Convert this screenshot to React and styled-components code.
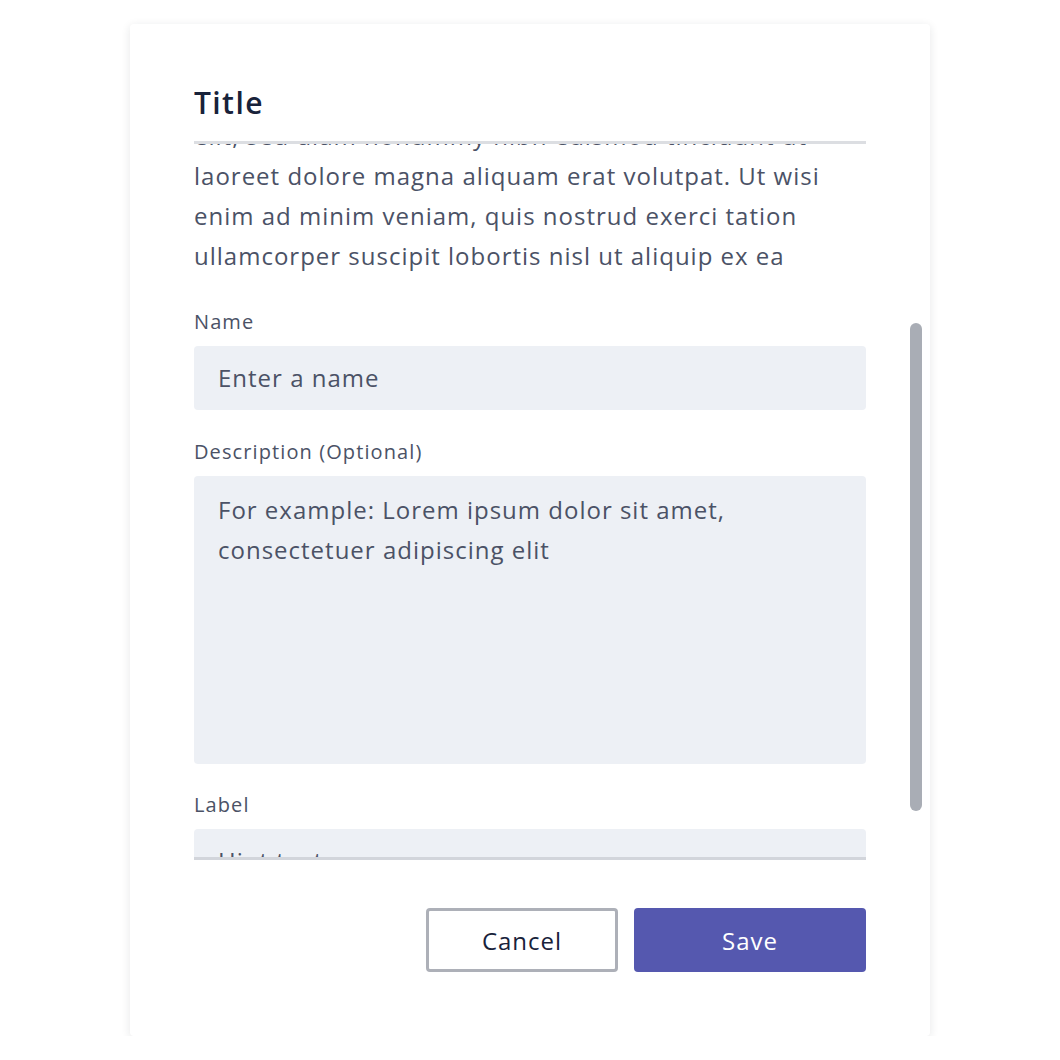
import React, { useLayoutEffect, useRef } from 'react';
import styled, { createGlobalStyle } from 'styled-components';

const GlobalStyle = createGlobalStyle`
  html, body {
    margin: 0;
    padding: 0;
    background: #ffffff;
  }
  body {
    font-family: "Open Sans", "Noto Sans", sans-serif;
  }
  * {
    box-sizing: border-box;
  }
`;

const Page = styled.div`
  display: flex;
  justify-content: center;
  padding-top: 24px;
`;

const Dialog = styled.div`
  position: relative;
  width: 800px;
  height: 1012px;
  background: #ffffff;
  border-radius: 4px;
  box-shadow: 0 2px 10px rgba(30, 35, 50, 0.11);
  padding: 59px 64px 64px;
  display: flex;
  flex-direction: column;
`;

const Title = styled.h1`
  margin: 0 0 18px;
  font-size: 30px;
  line-height: 40px;
  font-weight: 600;
  letter-spacing: 1.4px;
  color: #18223a;
`;

const ScrollFrame = styled.div`
  height: 719px;
  border-top: 3px solid #dcdee2;
  border-bottom: 3px solid #d2d5db;
  overflow-y: scroll;
  scrollbar-width: none;
  &::-webkit-scrollbar {
    display: none;
  }
`;

const Thumb = styled.div`
  position: absolute;
  right: 8px;
  top: 299px;
  width: 12px;
  height: 488px;
  border-radius: 6px;
  background: #a9adb5;
`;

const Paragraph = styled.p`
  margin: 0;
  font-size: 24px;
  line-height: 40px;
  letter-spacing: 1px;
  color: #4b5266;
  white-space: nowrap;
`;

const Field = styled.div`
  display: flex;
  flex-direction: column;
  gap: 10px;
  margin-top: ${(p) => p.$gap || 28}px;
`;

const Label = styled.label`
  font-size: 20px;
  line-height: 28px;
  letter-spacing: 1.1px;
  color: #4b5266;
`;

const Input = styled.div`
  height: ${(p) => p.$height || 64}px;
  background: #edf0f5;
  border-radius: 4px;
  padding: ${(p) => (p.$multi ? '14px 24px' : '0 24px')};
  display: flex;
  align-items: ${(p) => (p.$multi ? 'flex-start' : 'center')};
  font-size: 24px;
  line-height: 40px;
  letter-spacing: 1px;
  color: #4b5266;
`;

const Actions = styled.div`
  display: flex;
  justify-content: flex-end;
  gap: 16px;
  margin-top: 48px;
`;

const Button = styled.button`
  height: 64px;
  width: ${(p) => (p.$primary ? 232 : 192)}px;
  border-radius: 4px;
  font-family: inherit;
  font-size: 24px;
  letter-spacing: 1px;
  cursor: pointer;
  border: ${(p) => (p.$primary ? 'none' : '3px solid #adb0b8')};
  background: ${(p) => (p.$primary ? '#5558af' : '#ffffff')};
  color: ${(p) => (p.$primary ? '#ffffff' : '#18223a')};
`;

export default function App() {
  const scrollRef = useRef(null);

  useLayoutEffect(() => {
    if (scrollRef.current) scrollRef.current.scrollTop = 68;
  }, []);

  return (
    <>
      <GlobalStyle />
      <Page>
        <Dialog>
          <Title>Title</Title>
          <ScrollFrame ref={scrollRef}>
            <Paragraph>
              Lorem ipsum dolor sit amet, consectetuer adipiscing
              <br />
              elit, sed diam nonummy nibh euismod tincidunt ut
              <br />
              laoreet dolore magna aliquam erat volutpat. Ut wisi
              <br />
              enim ad minim veniam, quis nostrud exerci tation
              <br />
              ullamcorper suscipit lobortis nisl ut aliquip ex ea
            </Paragraph>
            <Field $gap={32}>
              <Label>Name</Label>
              <Input>Enter a name</Input>
            </Field>
            <Field>
              <Label>Description (Optional)</Label>
              <Input $multi $height={288}>
                For example: Lorem ipsum dolor sit amet,
                <br />
                consectetuer adipiscing elit
              </Input>
            </Field>
            <Field $gap={27}>
              <Label>Label</Label>
              <Input>Hint text</Input>
            </Field>
            <Field $gap={28} />
          </ScrollFrame>
          <Thumb />
          <Actions>
            <Button>Cancel</Button>
            <Button $primary>Save</Button>
          </Actions>
        </Dialog>
      </Page>
    </>
  );
}
